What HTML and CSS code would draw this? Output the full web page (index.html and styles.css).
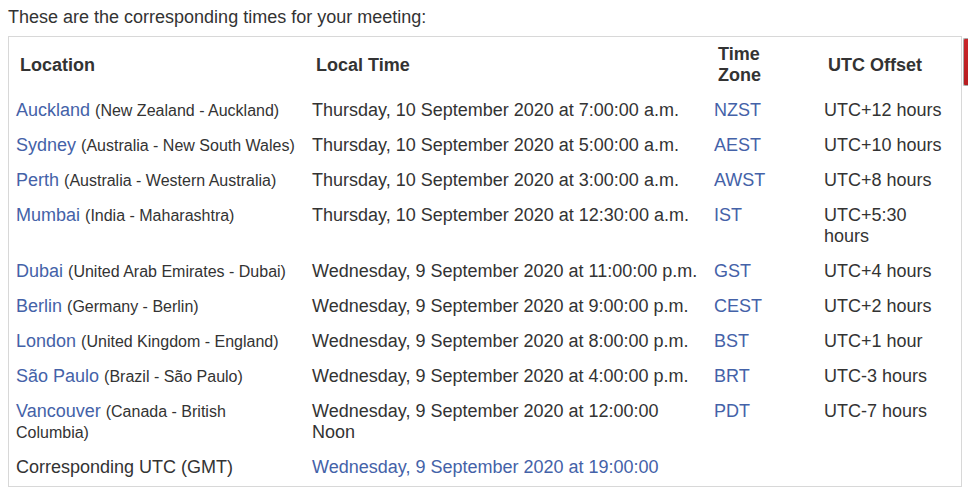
FILE: index.html
```html
<!DOCTYPE html>
<html>
<head>
<meta charset="utf-8">
<link rel="stylesheet" href="styles.css">
</head>
<body>
<p class="intro">These are the corresponding times for your meeting:</p>
<div class="box">
<table class="times">
<colgroup><col class="c1"><col class="c2"><col class="c3"><col class="c4"></colgroup>
<thead>
<tr><th>Location</th><th>Local Time</th><th>Time<br>Zone</th><th>UTC Offset</th></tr>
</thead>
<tbody>
<tr><td><a href="#">Auckland</a> <span class="sub">(New Zealand - Auckland)</span></td><td>Thursday, 10 September 2020 at 7:00:00 a.m.</td><td><a href="#">NZST</a></td><td>UTC+12 hours</td></tr>
<tr><td><a href="#">Sydney</a> <span class="sub">(Australia - New South Wales)</span></td><td>Thursday, 10 September 2020 at 5:00:00 a.m.</td><td><a href="#">AEST</a></td><td>UTC+10 hours</td></tr>
<tr><td><a href="#">Perth</a> <span class="sub">(Australia - Western Australia)</span></td><td>Thursday, 10 September 2020 at 3:00:00 a.m.</td><td><a href="#">AWST</a></td><td>UTC+8 hours</td></tr>
<tr><td><a href="#">Mumbai</a> <span class="sub">(India - Maharashtra)</span></td><td>Thursday, 10 September 2020 at 12:30:00 a.m.</td><td><a href="#">IST</a></td><td>UTC+5:30 hours</td></tr>
<tr><td><a href="#">Dubai</a> <span class="sub">(United Arab Emirates - Dubai)</span></td><td>Wednesday, 9 September 2020 at 11:00:00 p.m.</td><td><a href="#">GST</a></td><td>UTC+4 hours</td></tr>
<tr><td><a href="#">Berlin</a> <span class="sub">(Germany - Berlin)</span></td><td>Wednesday, 9 September 2020 at 9:00:00 p.m.</td><td><a href="#">CEST</a></td><td>UTC+2 hours</td></tr>
<tr><td><a href="#">London</a> <span class="sub">(United Kingdom - England)</span></td><td>Wednesday, 9 September 2020 at 8:00:00 p.m.</td><td><a href="#">BST</a></td><td>UTC+1 hour</td></tr>
<tr><td><a href="#">São Paulo</a> <span class="sub">(Brazil - São Paulo)</span></td><td>Wednesday, 9 September 2020 at 4:00:00 p.m.</td><td><a href="#">BRT</a></td><td>UTC-3 hours</td></tr>
<tr><td><a href="#">Vancouver</a> <span class="sub">(Canada - British Columbia)</span></td><td>Wednesday, 9 September 2020 at 12:00:00 Noon</td><td><a href="#">PDT</a></td><td>UTC-7 hours</td></tr>
<tr><td>Corresponding UTC (GMT)</td><td colspan="3"><a href="#">Wednesday, 9 September 2020 at 19:00:00</a></td></tr>
</tbody>
</table>
</div>
<div class="edge"></div>
</body>
</html>
```
FILE: styles.css
```css
html, body {
  margin: 0;
  padding: 0;
  background: #fff;
}
body {
  font-family: "Liberation Sans", Arial, sans-serif;
  color: #333;
  font-size: 18px;
  overflow: hidden;
  position: relative;
  width: 968px;
  height: 490px;
}
.intro {
  margin: 0;
  padding: 7px 0 0 8px;
  height: 29px;
  line-height: 21px;
}
.box {
  margin-left: 8px;
  width: 952px;
  border: 1px solid #d8d8d8;
  height: 449px;
}
.times {
  border-collapse: collapse;
  table-layout: fixed;
  width: 952px;
}
.c1 { width: 296px; }
.c2 { width: 402px; }
.c3 { width: 110px; }
.c4 { width: 144px; }
th, td {
  text-align: left;
  vertical-align: top;
  padding: 7px 7px;
  line-height: 21px;
}
th {
  font-weight: bold;
  vertical-align: middle;
  padding: 7px 7px 7px 11px;
}
th:nth-child(4), td:nth-child(4) {
  padding-right: 14px;
}
a {
  color: #4462a8;
  text-decoration: none;
}
.sub {
  font-size: 16px;
}
.edge {
  position: absolute;
  left: 963px;
  top: 38px;
  width: 6px;
  height: 46px;
  background: linear-gradient(#c9262a, #b71c1f);
  border: 1px solid #aaa;
  border-right: none;
  border-radius: 2px 0 0 2px;
}
```
